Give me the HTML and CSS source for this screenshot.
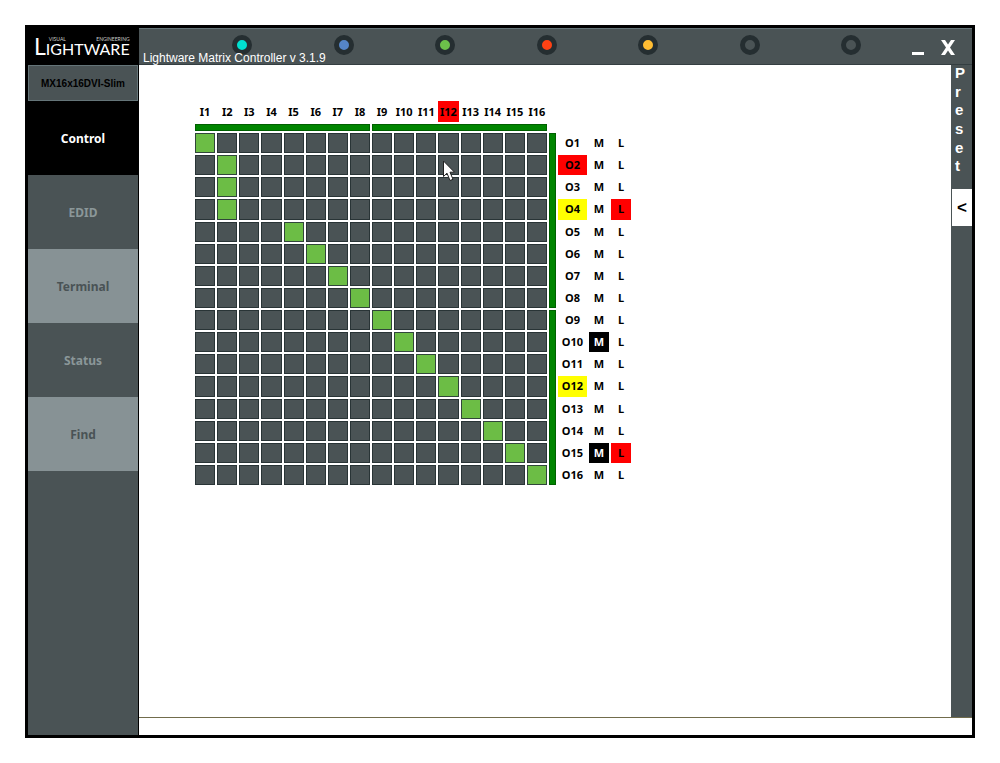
FILE: index.html
```html
<!DOCTYPE html>
<html lang="en">
<head>
<meta charset="utf-8">
<title>Lightware Matrix Controller</title>
<link rel="stylesheet" href="styles.css">
</head>
<body>
<div class="window">
  <aside class="sidebar">
    <div class="logo">
      <span class="logo-initial">L</span>
      <div class="logo-text">
        <div class="logo-tagline"><span>VISUAL</span><span>ENGINEERING</span></div>
        <div class="logo-name">IGHTWARE</div>
      </div>
    </div>
    <div class="model">MX16x16DVI-Slim</div>
    <nav class="nav">
      <button class="nav-item nav-active">Control</button>
      <button class="nav-item">EDID</button>
      <button class="nav-item nav-light">Terminal</button>
      <button class="nav-item">Status</button>
      <button class="nav-item nav-light">Find</button>
    </nav>
  </aside>
  <div class="workspace">
    <header class="titlebar">
      <div class="leds">
        <span class="led led-cyan"></span>
        <span class="led led-blue"></span>
        <span class="led led-green"></span>
        <span class="led led-red"></span>
        <span class="led led-amber"></span>
        <span class="led"></span>
        <span class="led"></span>
      </div>
      <div class="window-controls">
        <button class="control" aria-label="Minimize"><svg width="14" height="18" viewBox="0 0 14 18"><path d="M1 14.5H13" stroke="#fff" stroke-width="3"/></svg></button>
        <button class="control" aria-label="Close"><svg width="14" height="18" viewBox="0 0 14 18"><path d="M0 1H4L7 5.500 10 1H14L9 8.500 14 16H10L7 11.500 4 16H0L5 8.500Z" fill="#fff"/></svg></button>
      </div>
      <h1 class="title">Lightware Matrix Controller v 3.1.9</h1>
    </header>
    <div class="content">
      <main class="main">
        <div class="matrix">
          <div class="inputs" id="inputs"></div>
          <div class="bar-row"><span class="bar"></span><span class="bar"></span></div>
          <div class="cells" id="cells"></div>
          <div class="bar-column"><span class="bar"></span><span class="bar"></span></div>
          <div class="outputs" id="outputs"></div>
          <svg class="cursor" width="14" height="22" viewBox="0 0 14 22"><path d="M1.500 1V16.500L5 13.200 8 20.500 11 19.300 8 12.200H12.500Z" fill="#fff" stroke="#222" stroke-width="1"/></svg>
        </div>
      </main>
      <aside class="preset">
        <div class="preset-label"><span>P</span><span>r</span><span>e</span><span>s</span><span>e</span><span>t</span></div>
        <button class="preset-toggle">&lt;</button>
      </aside>
    </div>
    <footer class="statusbar"></footer>
  </div>
</div>
<script src="script.js"></script>
</body>
</html>
```

FILE: styles.css
```css
* { box-sizing: border-box; }

body {
  margin: 0;
  padding: 25px;
  background: #fff;
  font-family: "Liberation Sans", Arial, sans-serif;
}

button {
  margin: 0;
  padding: 0;
  border: 0;
  background: none;
  font: inherit;
  color: inherit;
}

.window {
  display: flex;
  min-height: calc(100vh - 50px);
  border: 3px solid #000;
}

.sidebar {
  display: flex;
  flex-direction: column;
  flex: 0 0 111px;
  border-right: 1px solid #000;
  background: #4a5355;
}

.logo {
  display: flex;
  height: 37px;
  padding: 8px 0 0 6px;
  background: #000;
  color: #fff;
  font-family: Lato, sans-serif;
}

.logo-initial {
  font-size: 23px;
  line-height: 20px;
}

.logo-name {
  font-size: 16px;
  line-height: 12px;
}

.logo-tagline {
  display: flex;
  justify-content: space-between;
  padding: 1px 0 1px 3px;
  font-size: 5px;
  line-height: 5px;
  color: #ccc;
}

.model {
  height: 36px;
  border: 1px solid #657579;
  font-size: 10px;
  font-weight: bold;
  line-height: 35px;
  text-align: center;
  color: #000;
}

.nav {
  display: flex;
  flex-direction: column;
}

.nav-item {
  height: 74px;
  background: #4a5355;
  color: #8b9799;
  font-family: "Noto Sans", sans-serif;
  font-size: 12px;
  font-weight: bold;
}

.nav-light {
  background: #879295;
  color: #4a5355;
}

.nav-active {
  background: #000;
  color: #fff;
}

.workspace {
  display: flex;
  flex-direction: column;
  flex: 1;
}

.titlebar {
  position: relative;
  display: flex;
  align-items: center;
  height: 37px;
  border-top: 1px solid #657579;
  border-bottom: 1px solid #343e41;
  background: #4a5355;
}

.title {
  position: absolute;
  left: 4px;
  bottom: -2px;
  margin: 0;
  font-size: 12px;
  font-weight: normal;
  line-height: 16px;
  color: #fff;
}

.leds {
  display: flex;
  flex: 1;
  justify-content: space-between;
  margin: 0 50px 4px 93px;
}

.led {
  width: 20px;
  height: 20px;
  border: 5px solid #252e31;
  border-radius: 50%;
  background: #4a5355;
}

.led-cyan { background: #00e0d0; }
.led-blue { background: #5585c8; }
.led-green { background: #6cc04a; }
.led-red { background: #ff4214; }
.led-amber { background: #ffbd33; }

.window-controls {
  display: flex;
  gap: 16px;
  padding: 2px 17px 0 0;
}

.control {
  width: 14px;
  height: 18px;
}

.control svg { display: block; }

.content {
  display: flex;
  flex: 1;
}

.main {
  flex: 1;
  padding: 36px 0 0 56px;
}

.matrix {
  position: relative;
  display: grid;
  grid-template-columns: 352px 7px 74px;
  grid-template-rows: 21px 7px 352px;
  gap: 2px;
  font-family: "Noto Sans", sans-serif;
  font-size: 11px;
  font-weight: bold;
  line-height: 20px;
  color: #000;
}

.inputs,
.bar-row {
  grid-column: 1 / -1;
  width: 352px;
}

.inputs,
.cells {
  display: grid;
  grid-template-columns: repeat(16, 1fr);
  gap: 2px;
}

.cells { grid-template-rows: repeat(16, 1fr); }

.label {
  display: flex;
  align-items: center;
  justify-content: center;
  min-width: 0;
}

.cell {
  border: 1px solid #293436;
  background: #4a5355;
}

.cell-on {
  border-color: #30463a;
  background: #6cbd45;
}

.bar-row,
.bar-column {
  display: flex;
  gap: 2px;
}

.bar-column { flex-direction: column; }

.bar {
  flex: 1;
  border: 1px solid #006000;
  background: #008500;
}

.outputs {
  display: grid;
  grid-template-columns: 29px 20px 20px;
  grid-template-rows: repeat(16, 1fr);
  gap: 2px;
}

.is-red { background: #f00; }
.is-yellow { background: #ff0; }

.is-black {
  background: #000;
  color: #fff;
}

.cursor {
  position: absolute;
  top: 59px;
  left: 247px;
}

.preset {
  flex: 0 0 21px;
  background: #4a5355;
  color: #fff;
  font-weight: bold;
}

.preset-label {
  display: grid;
  grid-template-rows: repeat(6, 1fr);
  height: 112px;
  padding-left: 4px;
  font-size: 15px;
  line-height: 16px;
}

.preset-toggle {
  display: block;
  width: 20px;
  height: 37px;
  margin: 12px 0 0 1px;
  background: #fff;
  color: #000;
  font-size: 17px;
}

.statusbar {
  height: 18px;
  border-top: 1px solid #716c4c;
}
```

FILE: script.js
```js
const SIZE = 16;
const routes = [1, 2, 2, 2, 5, 6, 7, 8, 9, 10, 11, 12, 13, 14, 15, 16];
const inputMarks = { 12: "is-red" };
const outputMarks = { 2: "is-red", 4: "is-yellow", 12: "is-yellow" };
const muted = [10, 15];
const locked = [4, 15];

function addButton(parent, className, text) {
  const button = document.createElement("button");
  button.className = className.trim();
  button.textContent = text;
  parent.append(button);
  return button;
}

const inputs = document.getElementById("inputs");
const cells = document.getElementById("cells");
const outputs = document.getElementById("outputs");

for (let i = 1; i <= SIZE; i++) {
  addButton(inputs, "label " + (inputMarks[i] || ""), "I" + i);
}

for (let o = 1; o <= SIZE; o++) {
  for (let i = 1; i <= SIZE; i++) {
    const on = routes[o - 1] === i;
    const cell = addButton(cells, on ? "cell cell-on" : "cell", "");
    cell.setAttribute("aria-label", `I${i} to O${o}`);
  }
  addButton(outputs, "label " + (outputMarks[o] || ""), "O" + o);
  addButton(outputs, "label " + (muted.includes(o) ? "is-black" : ""), "M");
  addButton(outputs, "label " + (locked.includes(o) ? "is-red" : ""), "L");
}
```
